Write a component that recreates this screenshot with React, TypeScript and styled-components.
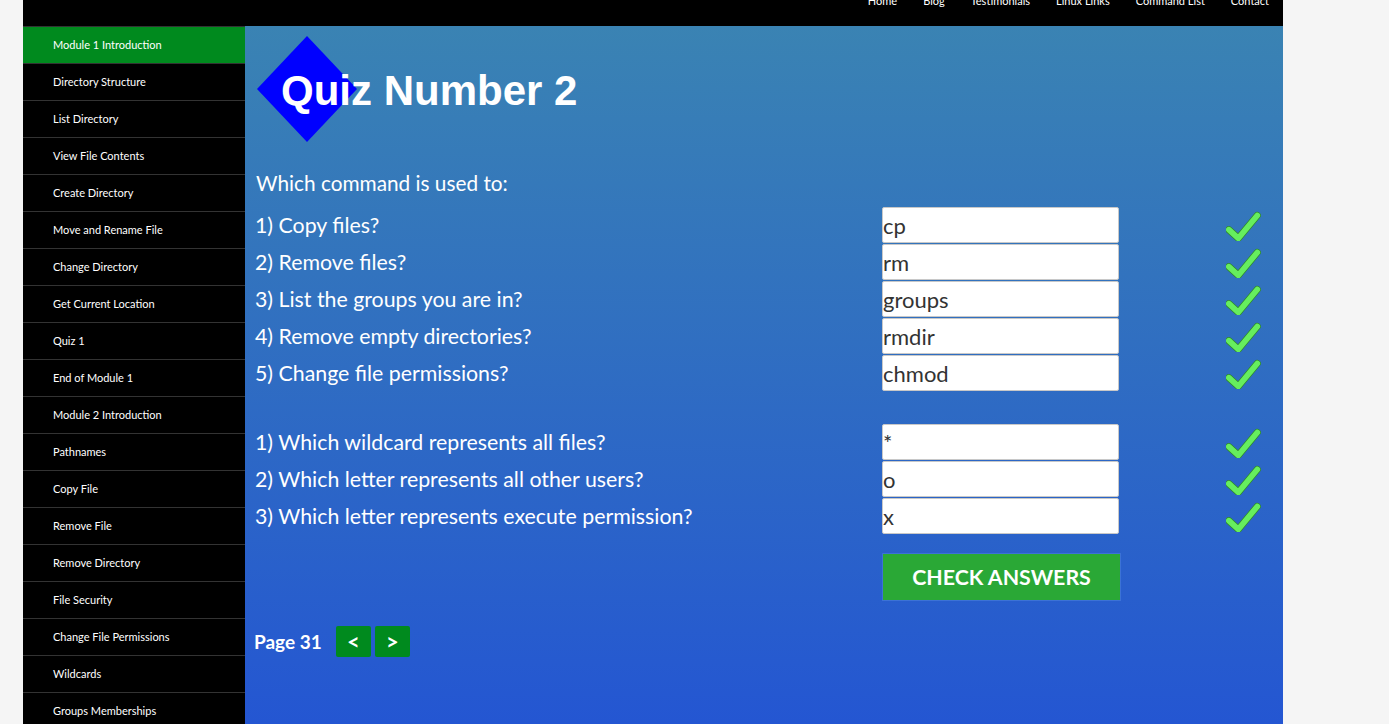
import React from "react";
import styled, { createGlobalStyle } from "styled-components";

const Global = createGlobalStyle`
  html, body { margin: 0; padding: 0; background: #f5f5f5; overflow: hidden; }
  body { font-family: Lato, "Open Sans", sans-serif; }
  * { box-sizing: border-box; }
`;

const Page = styled.div`
  width: 1260px;
  margin-left: 23px;
  height: 724px;
  display: flex;
  flex-direction: column;
  overflow: hidden;
`;

const TopBar = styled.header`
  height: 26px;
  background: #000;
  display: flex;
  justify-content: flex-end;
  align-items: flex-start;
  padding-right: 14px;
  gap: 26px;
  overflow: hidden;
`;

const NavLink = styled.a`
  color: #fff;
  font-size: 11px;
  line-height: 14px;
  margin-top: -6px;
  text-decoration: none;
`;

const Body = styled.div`
  display: flex;
  flex: 1;
  min-height: 0;
`;

const Sidebar = styled.nav`
  width: 222px;
  background: #000;
  display: flex;
  flex-direction: column;
`;

const SideItem = styled.a<{ $active?: boolean }>`
  display: flex;
  align-items: center;
  height: 37px;
  flex-shrink: 0;
  border-top: 1px solid #333;
  padding: 0 0 2px 30px;
  font-size: 11px;
  color: #fff;
  text-decoration: none;
  background: ${(p) => (p.$active ? "#008a1e" : "#000")};
`;

const Main = styled.main`
  flex: 1;
  background: linear-gradient(to bottom, #3a83b3 0%, #2456d2 100%);
  padding: 0 0 0 11px;
  display: flex;
  flex-direction: column;
`;

const TitleWrap = styled.div`
  position: relative;
  height: 130px;
  padding-left: 25px;
  padding-top: 40px;
  &::before {
    content: "";
    position: absolute;
    left: 1px;
    top: 10px;
    width: 100px;
    height: 106px;
    background: #0000ff;
    clip-path: polygon(50% 0, 100% 50%, 50% 100%, 0 50%);
  }
`;

const Title = styled.h1`
  position: relative;
  margin: 0;
  font-family: "Liberation Sans", Arial, sans-serif;
  font-weight: 700;
  font-size: 42px;
  line-height: 50px;
  color: #fff;
`;

const Intro = styled.p`
  margin: 14px 0 11px 0;
  font-size: 20.8px;
  line-height: 26px;
  color: #fff;
`;

const Group = styled.div`
  display: flex;
  flex-direction: column;
  gap: 1px;
  & + & { margin-top: 33px; }
`;

const Row = styled.div`
  display: grid;
  grid-template-columns: 626px 237px 143px;
  align-items: center;
  height: 36px;
`;

const Question = styled.span`
  font-size: 21.33px;
  line-height: 26px;
  margin: -1px 0 0 -1px;
  color: #fff;
`;

const Answer = styled.input`
  width: 237px;
  height: 36px;
  border: 1px solid #c8c8c8;
  border-radius: 2px;
  background: #fff;
  padding: 0;
  font-family: Lato, sans-serif;
  font-size: 22px;
  color: #333;
  outline: none;
`;

const CheckCell = styled.div`
  padding-left: 107px;
  display: flex;
  align-items: center;
`;

const Submit = styled.button`
  margin: 19px 0 0 626px;
  width: 239px;
  height: 48px;
  background: #2aa836;
  border: 1px solid #3c72d6;
  color: #fff;
  font-family: Lato, sans-serif;
  font-weight: 700;
  font-size: 21.33px;
  cursor: pointer;
`;

const Pager = styled.div`
  display: flex;
  align-items: center;
  margin-top: 25px;
  gap: 4px;
`;

const PageLabel = styled.span`
  font-weight: 700;
  font-size: 19px;
  color: #fff;
  margin: 0 10px 0 -2px;
`;

const PageBtn = styled.button`
  width: 35px;
  height: 31px;
  background: #008a1e;
  border: none;
  border-radius: 2px;
  color: #fff;
  font-family: Lato, sans-serif;
  font-weight: 700;
  font-size: 22px;
  padding: 0;
`;

const Check = () => (
  <svg width="38" height="32" viewBox="0 0 38 32">
    <path
      d="M3 21 L13 30 L33 6"
      fill="none"
      stroke="#2f8a2a"
      strokeWidth="7.5"
      strokeLinejoin="miter"
      strokeLinecap="round"
    />
    <path
      d="M3 21 L13 30 L33 6"
      fill="none"
      stroke="#66ee5e"
      strokeWidth="6"
      strokeLinejoin="miter"
      strokeLinecap="round"
    />
  </svg>
);

const navLinks = ["Home", "Blog", "Testimonials", "Linux Links", "Command List", "Contact"];
const sideLinks = [
  "Module 1 Introduction",
  "Directory Structure",
  "List Directory",
  "View File Contents",
  "Create Directory",
  "Move and Rename File",
  "Change Directory",
  "Get Current Location",
  "Quiz 1",
  "End of Module 1",
  "Module 2 Introduction",
  "Pathnames",
  "Copy File",
  "Remove File",
  "Remove Directory",
  "File Security",
  "Change File Permissions",
  "Wildcards",
  "Groups Memberships",
];

const group1 = [
  ["1) Copy files?", "cp"],
  ["2) Remove files?", "rm"],
  ["3) List the groups you are in?", "groups"],
  ["4) Remove empty directories?", "rmdir"],
  ["5) Change file permissions?", "chmod"],
];
const group2 = [
  ["1) Which wildcard represents all files?", "*"],
  ["2) Which letter represents all other users?", "o"],
  ["3) Which letter represents execute permission?", "x"],
];

const QRow = ({ q, a }: { q: string; a: string }) => (
  <Row>
    <Question>{q}</Question>
    <Answer defaultValue={a} />
    <CheckCell>
      <Check />
    </CheckCell>
  </Row>
);

export default function App() {
  return (
    <>
      <Global />
      <Page>
        <TopBar>
          {navLinks.map((n) => (
            <NavLink key={n}>{n}</NavLink>
          ))}
        </TopBar>
        <Body>
          <Sidebar>
            {sideLinks.map((s, i) => (
              <SideItem key={s} $active={i === 0}>
                {s}
              </SideItem>
            ))}
          </Sidebar>
          <Main>
            <TitleWrap>
              <Title>Quiz Number 2</Title>
            </TitleWrap>
            <Intro>Which command is used to:</Intro>
            <Group>
              {group1.map(([q, a]) => (
                <QRow key={q} q={q} a={a} />
              ))}
            </Group>
            <Group>
              {group2.map(([q, a]) => (
                <QRow key={q} q={q} a={a} />
              ))}
            </Group>
            <Submit>CHECK ANSWERS</Submit>
            <Pager>
              <PageLabel>Page 31</PageLabel>
              <PageBtn>&lt;</PageBtn>
              <PageBtn>&gt;</PageBtn>
            </Pager>
          </Main>
        </Body>
      </Page>
    </>
  );
}
